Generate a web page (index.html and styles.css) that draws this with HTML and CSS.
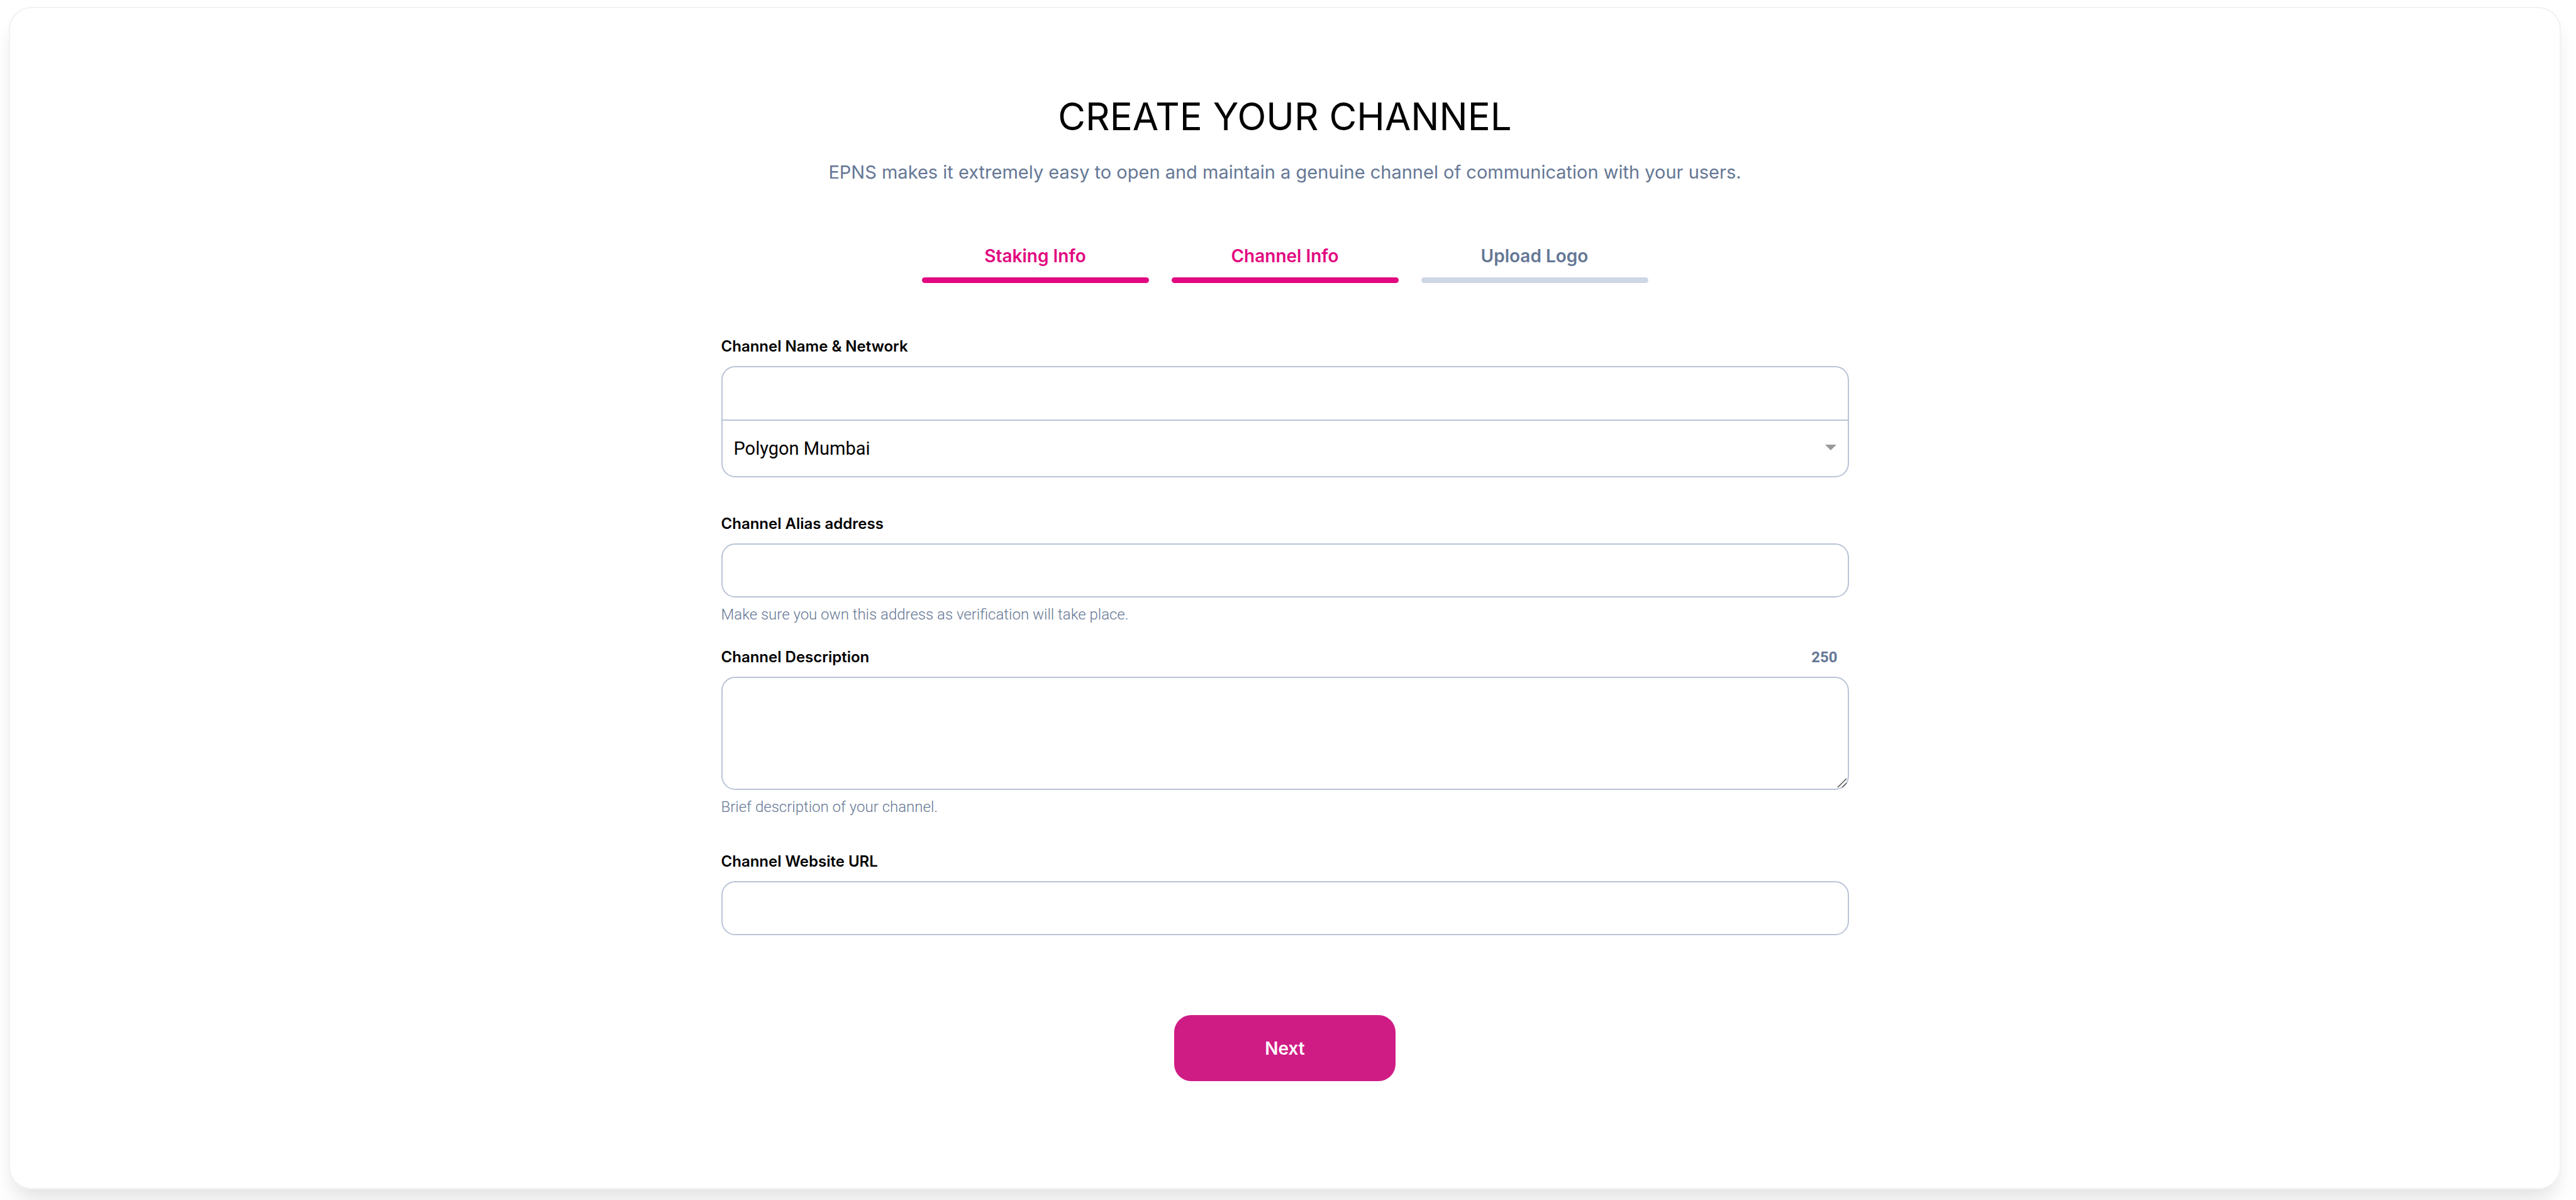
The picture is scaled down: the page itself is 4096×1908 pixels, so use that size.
FILE: index.html
```html
<!DOCTYPE html>
<html lang="en">
<head>
  <meta charset="utf-8">
  <meta name="viewport" content="width=device-width, initial-scale=1">
  <title>Create Your Channel</title>
  <link rel="stylesheet" href="styles.css">
</head>
<body>
  <main class="card">
    <header class="intro">
      <h1 class="title">CREATE YOUR CHANNEL</h1>
      <p class="subtitle">EPNS makes it extremely easy to open and maintain a genuine channel of communication with your users.</p>
    </header>

    <ol class="steps">
      <li class="step step-active">Staking Info</li>
      <li class="step step-active" aria-current="step">Channel Info</li>
      <li class="step">Upload Logo</li>
    </ol>

    <form class="form">
      <div class="field field-group">
        <label class="label" for="name">Channel Name &amp; Network</label>
        <div class="group">
          <input class="control group-top" id="name" type="text">
          <div class="control-wrap">
            <select class="control group-bottom" id="network" aria-label="Network">
              <option>Polygon Mumbai</option>
            </select>
            <svg class="arrow" viewBox="0 0 18 9" aria-hidden="true"><path d="M0 0h18l-9 9z"/></svg>
          </div>
        </div>
      </div>

      <div class="field field-tight">
        <label class="label" for="alias">Channel Alias address</label>
        <input class="control" id="alias" type="text">
        <p class="hint">Make sure you own this address as verification will take place.</p>
      </div>

      <div class="field">
        <div class="label-row">
          <label class="label" for="description">Channel Description</label>
          <span class="counter">250</span>
        </div>
        <div class="control-wrap">
          <textarea class="control control-area" id="description"></textarea>
          <svg class="grip" viewBox="0 0 16 16" aria-hidden="true"><path d="M1 15L15 1M8 15L15 8"/></svg>
        </div>
        <p class="hint">Brief description of your channel.</p>
      </div>

      <div class="field">
        <label class="label" for="url">Channel Website URL</label>
        <input class="control" id="url" type="url">
      </div>

      <button class="next" type="button">Next</button>
    </form>
  </main>
</body>
</html>
```
FILE: styles.css
```css
* {
  box-sizing: border-box;
}

body {
  margin: 0;
  min-height: 100vh;
  display: flex;
  padding: 11px 24px 17px 14px;
  background: #fff;
  color: #000;
  font-family: Inter, "Liberation Sans", sans-serif;
}

.card {
  flex: 1;
  display: flex;
  flex-direction: column;
  align-items: center;
  padding: 137px 36px;
  border: 2px solid #f2f2f2;
  border-radius: 36px;
  background: #fff;
  box-shadow: 0 27px 36px -9px rgba(0, 0, 0, 0.1), 0 9px 27px rgba(0, 0, 0, 0.02);
}

.intro {
  display: flex;
  flex-direction: column;
  gap: 36px;
  text-align: center;
}

.title {
  margin: 0;
  font-size: 60px;
  line-height: 70px;
  font-weight: 400;
}

.subtitle {
  margin: 0;
  font-size: 29px;
  line-height: 36px;
  color: #657795;
}

.steps {
  display: flex;
  gap: 36px;
  width: 100%;
  max-width: 1155px;
  margin: 97px 0 86px;
  padding: 0;
  list-style: none;
}

.step {
  flex: 1;
  display: flex;
  flex-direction: column;
  gap: 16px;
  text-align: center;
  font-size: 28px;
  line-height: 36px;
  font-weight: 600;
  color: #657795;
}

.step::after {
  content: "";
  height: 9px;
  border-radius: 5px;
  background: #cfd6e4;
}

.step-active {
  color: #e20880;
}

.step-active::after {
  background: #e20880;
}

.form {
  display: flex;
  flex-direction: column;
  width: 100%;
  max-width: 1793px;
}

.field {
  display: flex;
  flex-direction: column;
  margin-bottom: 57px;
}

.field-group {
  margin-bottom: 59px;
}

.field-tight {
  margin-bottom: 38px;
}

.label {
  margin-bottom: 16px;
  font-size: 24px;
  line-height: 30px;
  font-weight: 600;
}

.label-row {
  display: flex;
  justify-content: space-between;
  padding-right: 18px;
}

.counter {
  font-family: Roboto, "Liberation Sans", sans-serif;
  font-size: 24px;
  line-height: 30px;
  font-weight: 700;
  color: #657795;
}

.control {
  display: block;
  width: 100%;
  height: 86px;
  margin: 0;
  padding: 0 18px;
  border: 2px solid #bac4d6;
  border-radius: 22px;
  outline: none;
  background: #fff;
  color: #000;
  font-family: Roboto, "Liberation Sans", sans-serif;
  font-size: 29px;
}

.group-top {
  height: 87px;
  border-radius: 22px 22px 0 0;
}

.group-bottom {
  height: 90px;
  border-top: 0;
  border-radius: 0 0 22px 22px;
  appearance: none;
}

.control-wrap {
  position: relative;
}

.arrow {
  position: absolute;
  top: 38px;
  right: 20px;
  width: 18px;
  height: 9px;
  fill: #999;
  pointer-events: none;
}

.control-area {
  height: 180px;
  padding: 18px;
  resize: none;
}

.grip {
  position: absolute;
  right: 3px;
  bottom: 3px;
  width: 16px;
  height: 16px;
  fill: none;
  stroke: #555;
  stroke-width: 1.5;
  pointer-events: none;
}

.hint {
  margin: 12px 0 0;
  font-family: Roboto, "Liberation Sans", sans-serif;
  font-size: 24px;
  line-height: 30px;
  font-weight: 300;
  color: #657795;
}

.next {
  align-self: center;
  width: 352px;
  height: 105px;
  margin-top: 70px;
  border: 0;
  border-radius: 27px;
  background: #cf1c84;
  color: #fff;
  font-family: inherit;
  font-size: 28px;
  font-weight: 600;
}
```
